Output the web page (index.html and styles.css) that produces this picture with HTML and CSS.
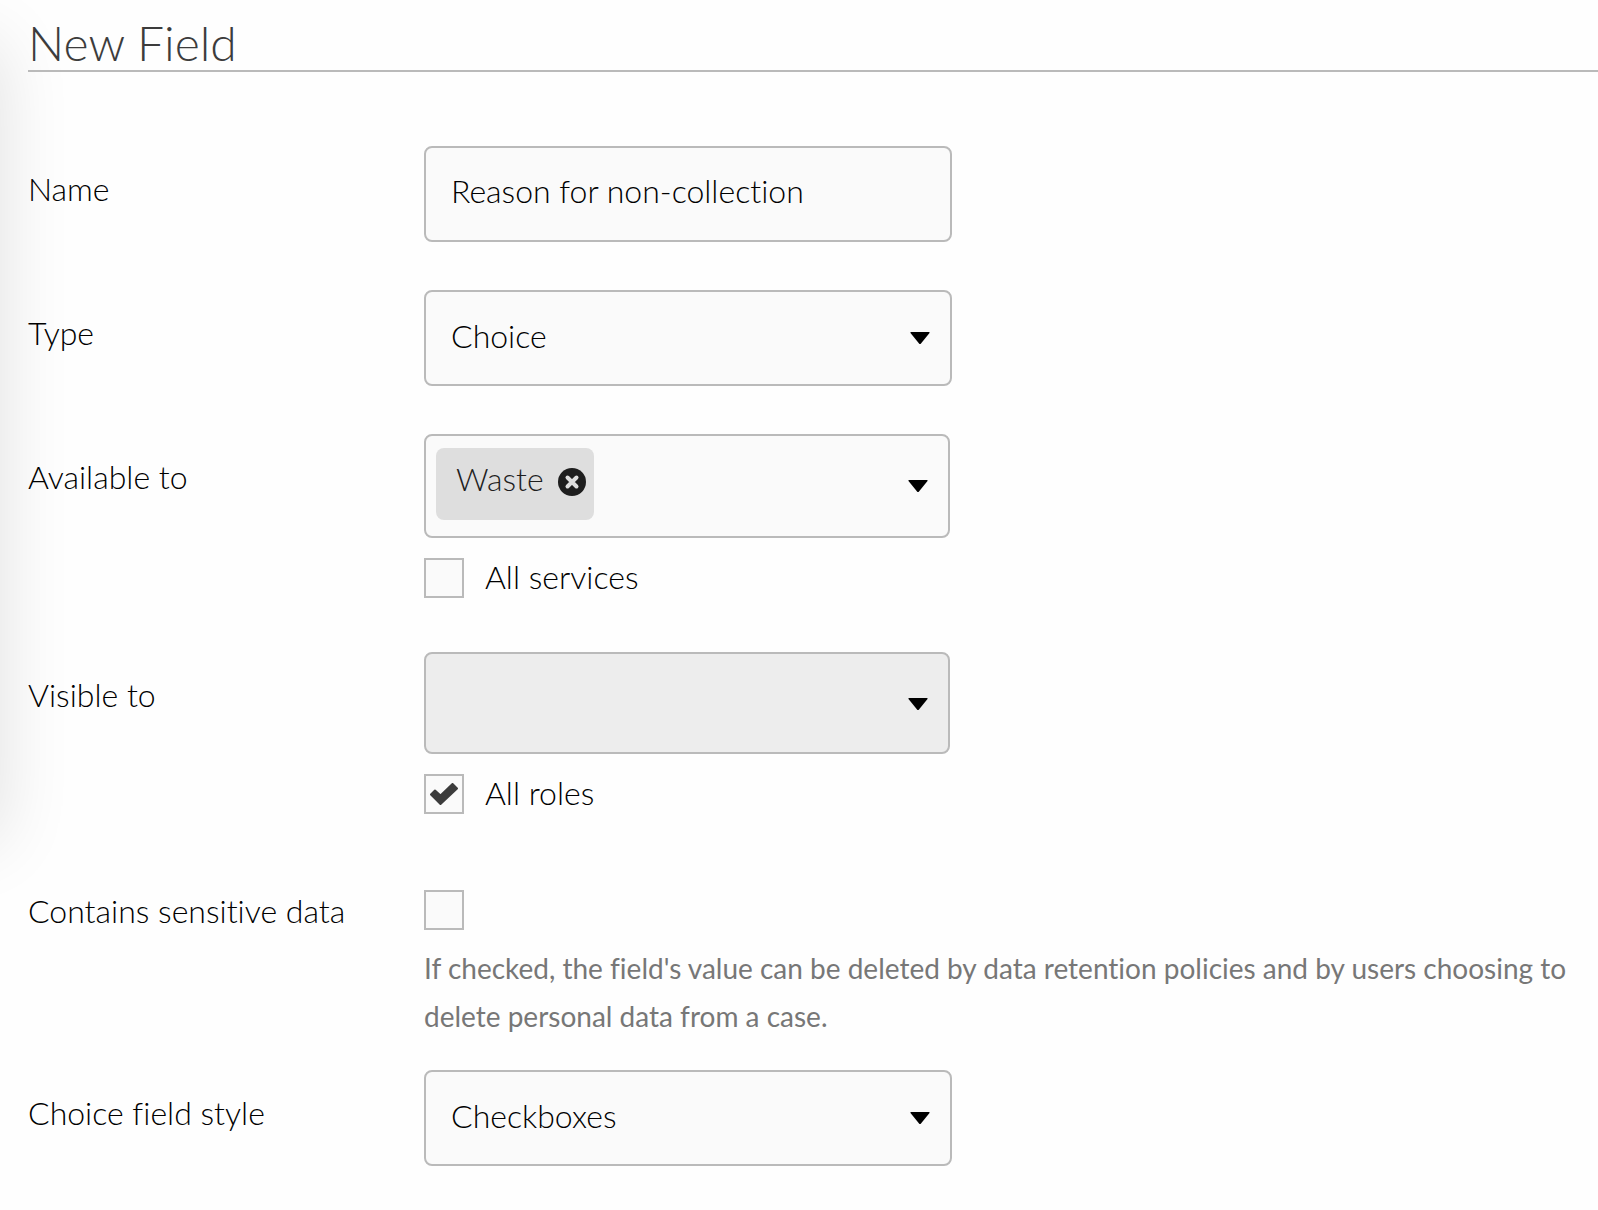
FILE: index.html
```html
<!DOCTYPE html>
<html lang="en">
<head>
<meta charset="utf-8">
<meta name="viewport" content="width=device-width, initial-scale=1">
<title>New Field</title>
<link rel="stylesheet" href="styles.css">
</head>
<body>
<div class="side-shadow"></div>
<main class="page">
  <h1 class="title">New Field</h1>
  <form class="form">
    <div class="row">
      <label class="label" for="name">Name</label>
      <div class="field"><input class="control" id="name" type="text" value="Reason for non-collection"></div>
    </div>
    <div class="row">
      <label class="label" for="type">Type</label>
      <div class="field">
        <div class="select">
          <select class="control" id="type"><option>Choice</option></select>
          <svg class="arrow" viewBox="0 0 20 12"><path d="M1 0h18q1 0 .5 1L11 11.500q-1 1-2 0L.5 1Q0 0 1 0z"/></svg>
        </div>
      </div>
    </div>
    <div class="row">
      <label class="label" for="available">Available to</label>
      <div class="field">
        <div class="multi">
          <span class="chip">Waste
            <button class="remove" type="button" aria-label="Remove Waste">
              <svg class="remove-icon" viewBox="0 0 28 28"><circle cx="14" cy="14" r="14"/><path d="M9.500 9.500l9 9M18.500 9.500l-9 9"/></svg>
            </button>
          </span>
          <input class="multi-input" id="available" type="text">
          <svg class="arrow" viewBox="0 0 20 12"><path d="M1 0h18q1 0 .5 1L11 11.500q-1 1-2 0L.5 1Q0 0 1 0z"/></svg>
        </div>
        <label class="check"><input class="box" type="checkbox"><span class="check-text">All services</span></label>
      </div>
    </div>
    <div class="row">
      <label class="label" for="visible">Visible to</label>
      <div class="field">
        <div class="multi multi-disabled">
          <input class="multi-input" id="visible" type="text" disabled>
          <svg class="arrow" viewBox="0 0 20 12"><path d="M1 0h18q1 0 .5 1L11 11.500q-1 1-2 0L.5 1Q0 0 1 0z"/></svg>
        </div>
        <label class="check"><span class="tick-wrap"><input class="box" type="checkbox" checked><svg class="tick" viewBox="0 0 28 22"><path d="M1 11.500L5 7.500L10.500 12.500L22.500 1L27 5.500L10.500 21Z"/></svg></span><span class="check-text">All roles</span></label>
      </div>
    </div>
    <div class="row">
      <label class="label" for="sensitive">Contains sensitive data</label>
      <div class="field field-check">
        <input class="box" id="sensitive" type="checkbox" aria-describedby="sensitive-hint">
        <p class="hint" id="sensitive-hint">If checked, the field's value can be deleted by data retention policies and by users choosing to delete personal data from a case.</p>
      </div>
    </div>
    <div class="row">
      <label class="label" for="style">Choice field style</label>
      <div class="field">
        <div class="select">
          <select class="control" id="style"><option>Checkboxes</option></select>
          <svg class="arrow" viewBox="0 0 20 12"><path d="M1 0h18q1 0 .5 1L11 11.500q-1 1-2 0L.5 1Q0 0 1 0z"/></svg>
        </div>
      </div>
    </div>
  </form>
</main>
</body>
</html>
```
FILE: styles.css
```css
* {
  box-sizing: border-box;
}

body {
  margin: 0;
  background: #fefefe;
  color: #000;
  font-family: Lato, "Liberation Sans", sans-serif;
  font-size: 32px;
  font-weight: 300;
  font-variant-ligatures: none;
  line-height: 40px;
  overflow-x: hidden;
}

/* Shadow cast by the panel to the left of the page */
.side-shadow {
  position: absolute;
  left: -200px;
  top: 44px;
  width: 200px;
  height: 796px;
  box-shadow: 0 0 72px rgba(0, 0, 0, .12);
}

.page {
  position: relative;
  padding: 16px 0 44px 28px;
}

.title {
  margin: 0;
  border-bottom: 2px solid #bababa;
  color: #3c3c3c;
  font-size: 48px;
  font-weight: 300;
  line-height: 54px;
}

.form {
  display: flex;
  flex-direction: column;
  gap: 48px;
  padding: 74px 28px 0 0;
}

.row {
  display: grid;
  grid-template-columns: 396px minmax(0, 1fr);
}

.label {
  padding-top: 23px;
}

.control {
  display: block;
  width: 100%;
  max-width: 528px;
  height: 96px;
  padding: 0 25px 4px;
  border: 2px solid #bababa;
  border-radius: 8px;
  background: #fafafa;
  color: #000;
  font: inherit;
  font-variant-ligatures: none;
  appearance: none;
}

input.control {
  padding-bottom: 8px;
}

.select {
  display: grid;
  max-width: 528px;
  align-items: center;
}

.select > * {
  grid-area: 1 / 1;
}

.arrow {
  width: 20px;
  height: 12px;
  margin-right: 22px;
  justify-self: end;
  pointer-events: none;
}

.multi {
  display: flex;
  align-items: flex-start;
  max-width: 526px;
  height: 104px;
  padding: 12px 0 0 10px;
  border: 2px solid #bababa;
  border-radius: 8px;
  background: #fafafa;
}

.multi .arrow {
  margin: 32px 20px 0 0;
}

.multi-disabled {
  height: 102px;
  background: #ededed;
}

.multi-input {
  flex: 1;
  min-width: 0;
  height: 72px;
  border: 0;
  background: none;
  font: inherit;
}

.chip {
  display: flex;
  align-items: flex-start;
  gap: 14px;
  height: 72px;
  padding: 11px 8px 0 20px;
  border-radius: 8px;
  background: #dedede;
  color: #1e1e1e;
}

.remove {
  display: block;
  margin: 9px 0 0;
  padding: 0;
  border: 0;
  background: none;
}

.remove-icon {
  display: block;
  width: 28px;
  height: 28px;
  fill: #1e1e1e;
}

.remove-icon path {
  stroke: #dedede;
  stroke-width: 4;
  stroke-linecap: round;
}

.check {
  display: flex;
  align-items: center;
  width: fit-content;
  gap: 21px;
  margin: 20px 0 6px;
}

.check-text {
  padding-bottom: 3px;
  line-height: 37px;
}

.box {
  display: block;
  flex: none;
  width: 40px;
  height: 40px;
  margin: 0;
  border: 2px solid #bababa;
  background: #fafafa;
  appearance: none;
}

.tick-wrap {
  display: grid;
  place-items: center;
}

.tick-wrap > * {
  grid-area: 1 / 1;
}

.tick {
  width: 28px;
  height: 22px;
  fill: #3c3c3c;
  stroke: #3c3c3c;
  stroke-width: 2;
  stroke-linejoin: round;
  pointer-events: none;
}

.field-check {
  padding-top: 22px;
}

.hint {
  margin: 14px 0 -18px;
  color: #777;
  font-size: 28px;
  font-weight: 400;
  line-height: 48px;
}
```
